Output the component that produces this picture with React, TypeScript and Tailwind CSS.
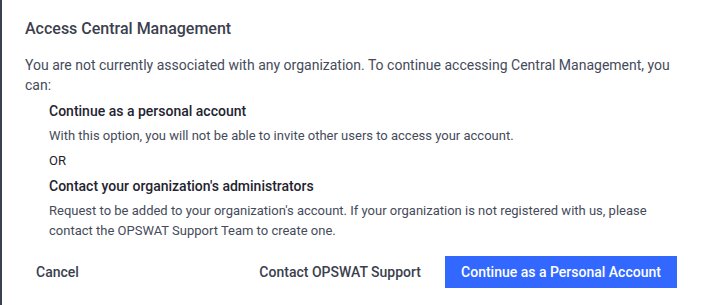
export default function App() {
  return (
    <div className="w-[701px] h-[305px] bg-white border-l-2 border-[#3b3f4e] font-['Roboto',sans-serif] text-[#454b5a] overflow-hidden">
      <div className="pl-[23px] pr-[24px] pt-[18px]">
        <h2 className="text-[16px] leading-[22px] font-medium text-[#3b3f4e]">Access Central Management</h2>
        <p className="mt-[15px] text-[14px] leading-[20px]">
          You are not currently associated with any organization. To continue accessing Central Management, you can:
        </p>
        <div className="pl-[24px] mt-[6px]">
          <p className="text-[14px] leading-[20px] font-medium text-[#1f2430]">Continue as a personal account</p>
          <p className="mt-[5px] text-[13px] leading-[19px]">
            With this option, you will not be able to invite other users to access your account.
          </p>
          <p className="mt-[6px] text-[13px] leading-[19px] text-[#1f2430]">OR</p>
          <p className="mt-[6px] text-[14px] leading-[20px] font-medium text-[#1f2430]">Contact your organization's administrators</p>
          <p className="mt-[5px] text-[13px] leading-[20px]">
            Request to be added to your organization's account. If your organization is not registered with us, please contact the OPSWAT Support Team to create one.
          </p>
        </div>
      </div>
      <div className="flex items-center mt-[15px] pl-[22px] pr-[24px]">
        <button className="px-[12px] h-[32px] text-[14px] font-medium text-[#3b3f4e]">Cancel</button>
        <div className="flex-1" />
        <button className="px-[12px] h-[32px] text-[14px] font-medium text-[#3b3f4e] mr-[12px]">Contact OPSWAT Support</button>
        <button className="h-[32px] w-[232px] bg-[#3268ff] text-white text-[14px] font-medium">Continue as a Personal Account</button>
      </div>
    </div>
  )
}
